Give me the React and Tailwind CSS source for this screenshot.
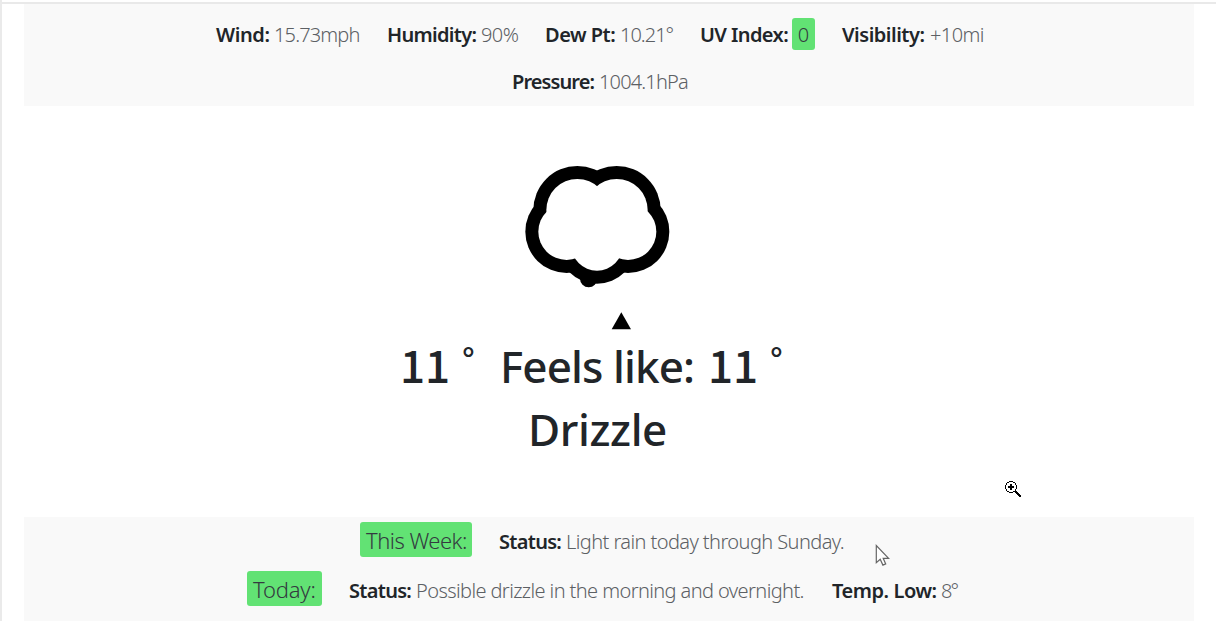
import React from "react";

const label = "font-semibold text-[#212529]";
const value = "font-light text-[#5c6064]";
const digits = "font-['Noto_Sans_CJK_SC','Noto_Sans',sans-serif] font-medium";

function Text({ className, children }) {
  return <span className={`block shrink-0 whitespace-nowrap ${className}`}>{children}</span>;
}

function CloudIcon() {
  return (
    <svg className="block h-[190px] w-[200px]" viewBox="0 0 600 570" aria-hidden="true">
      <g fill="#000">
        <circle cx="232" cy="180" r="132" />
        <circle cx="350" cy="180" r="132" />
        <circle cx="200" cy="245" r="124" />
        <circle cx="384" cy="245" r="124" />
        <circle cx="291" cy="284" r="117" />
        <circle cx="266" cy="386" r="26" />
        <path d="M364 487 393 538H335Z" />
      </g>
      <g fill="#fff">
        <circle cx="232" cy="180" r="93" />
        <circle cx="350" cy="180" r="93" />
        <circle cx="200" cy="245" r="85" />
        <circle cx="384" cy="245" r="85" />
        <circle cx="291" cy="284" r="78" />
        <path d="M220 150H360V290H220Z" />
      </g>
    </svg>
  );
}

function ZoomCursor() {
  return (
    <svg className="absolute left-[1003px] top-[481px] h-4 w-4" viewBox="0 0 16 16" shapeRendering="crispEdges" fill="none" stroke="#000" aria-hidden="true">
      <path d="M4 .5h4M4 11.5h4M.5 4v4M11.5 4v4M2 1.5h2M8 1.5h2M1.5 2v2M10.5 2v2M1.5 8v2M10.5 8v2M2 10.5h2M8 10.5h2" />
      <path d="M3 6h6M6 3v6" strokeWidth="2" />
      <path d="M10 10l5.5 5.5" strokeWidth="2" />
    </svg>
  );
}

function ArrowCursor() {
  return (
    <svg className="absolute left-[873px] top-[544px] h-[23px] w-4" viewBox="0 0 16 23" aria-hidden="true">
      <path d="M1.3 1.5V18.6L5.2 15.2L7.9 21.1L10.7 19.9L8.2 14.3H13.6Z" fill="#fff" stroke="#666" strokeWidth="1.2" />
    </svg>
  );
}

export default function App() {
  return (
    <main className="relative flex h-[621px] w-[1216px] flex-col overflow-hidden border-l-2 border-[#eaeaea] bg-white font-['Noto_Sans','Open_Sans',sans-serif] text-xl leading-[33px]">
      <div className="h-[2px] shrink-0" />
      <div className="h-[2px] shrink-0 bg-[#e9e9e9]" />

      <section className="ml-[22px] flex h-[102px] w-[1170px] shrink-0 flex-col gap-[15px] bg-[#f9f9f9] pt-[14px]">
        <div className="flex h-8 pl-[192px]">
          <Text className={`w-[58px] tracking-[-0.4px] ${label}`}>Wind:</Text>
          <Text className={`w-[113px] tracking-[-0.85px] ${value}`}>15.73mph</Text>
          <Text className={`w-[94px] tracking-[-0.7px] ${label}`}>Humidity:</Text>
          <Text className={`w-[64px] tracking-[-0.6px] ${value}`}>90%</Text>
          <Text className={`w-[75px] tracking-[-0.5px] ${label}`}>Dew Pt:</Text>
          <Text className={`w-[80px] tracking-[-1px] ${value}`}>10.21°</Text>
          <Text className={`w-[92px] tracking-[-0.6px] ${label}`}>UV Index:</Text>
          <Text className="mr-[27px] h-8 w-[23px] rounded-[3px] bg-[#62e274] text-center font-light text-[#343a40]">0</Text>
          <Text className={`w-[88px] tracking-[-0.5px] ${label}`}>Visibility:</Text>
          <Text className={`w-[60px] tracking-[-0.6px] ${value}`}>+10mi</Text>
        </div>
        <div className="flex h-8 pl-[488px]">
          <Text className={`w-[87px] tracking-[-0.9px] ${label}`}>Pressure:</Text>
          <Text className={`w-[92px] tracking-[-0.85px] ${value}`}>1004.1hPa</Text>
        </div>
      </section>

      <section className="flex h-[411px] shrink-0 flex-col pt-11">
        <div className="pl-[498px]">
          <CloudIcon />
        </div>
        <h1 className="flex h-16 pl-[398px] text-[44px] font-medium leading-[52px] text-[#212529]">
          <Text className={`w-[62px] leading-[49px] ${digits}`}>11</Text>
          <Text className="w-[38px] text-[30px] leading-[37px]">°</Text>
          <Text className="w-[208px] tracking-[-0.9px]">Feels like:</Text>
          <Text className={`w-[62px] leading-[49px] ${digits}`}>11</Text>
          <Text className="w-[30px] text-[30px] leading-[37px]">°</Text>
        </h1>
        <h2 className="pl-[526px] text-[44px] font-medium leading-[51px] tracking-[-0.4px] text-[#212529]">Drizzle</h2>
      </section>

      <section className="ml-[22px] flex h-[104px] w-[1170px] shrink-0 flex-col gap-[14px] bg-[#f9f9f9] pt-[5px]">
        <div className="flex h-[35px] items-center pl-[336px]">
          <Text className="mr-[27px] h-[35px] w-[112px] rounded-[3px] bg-[#62e274] pl-[6px] text-[22px] font-light leading-[37px] tracking-[-0.5px] text-[#343a40]">This Week:</Text>
          <Text className={`w-[67px] pt-[4px] tracking-[-0.7px] ${label}`}>Status:</Text>
          <Text className={`w-[290px] pt-[4px] tracking-[-0.58px] ${value}`}>Light rain today through Sunday.</Text>
        </div>
        <div className="flex h-[35px] items-center pl-[223px]">
          <Text className="mr-[27px] h-[35px] w-[75px] rounded-[3px] bg-[#62e274] pl-[6px] text-[22px] font-light leading-[37px] tracking-[-0.2px] text-[#343a40]">Today:</Text>
          <Text className={`w-[67px] pt-[4px] tracking-[-0.7px] ${label}`}>Status:</Text>
          <Text className={`w-[416px] pt-[4px] tracking-[-0.6px] ${value}`}>Possible drizzle in the morning and overnight.</Text>
          <Text className={`w-[109px] pt-[4px] tracking-[-0.45px] ${label}`}>Temp. Low:</Text>
          <Text className={`w-[30px] pt-[4px] tracking-[-2px] ${value}`}>8°</Text>
        </div>
      </section>

      <ZoomCursor />
      <ArrowCursor />
    </main>
  );
}
